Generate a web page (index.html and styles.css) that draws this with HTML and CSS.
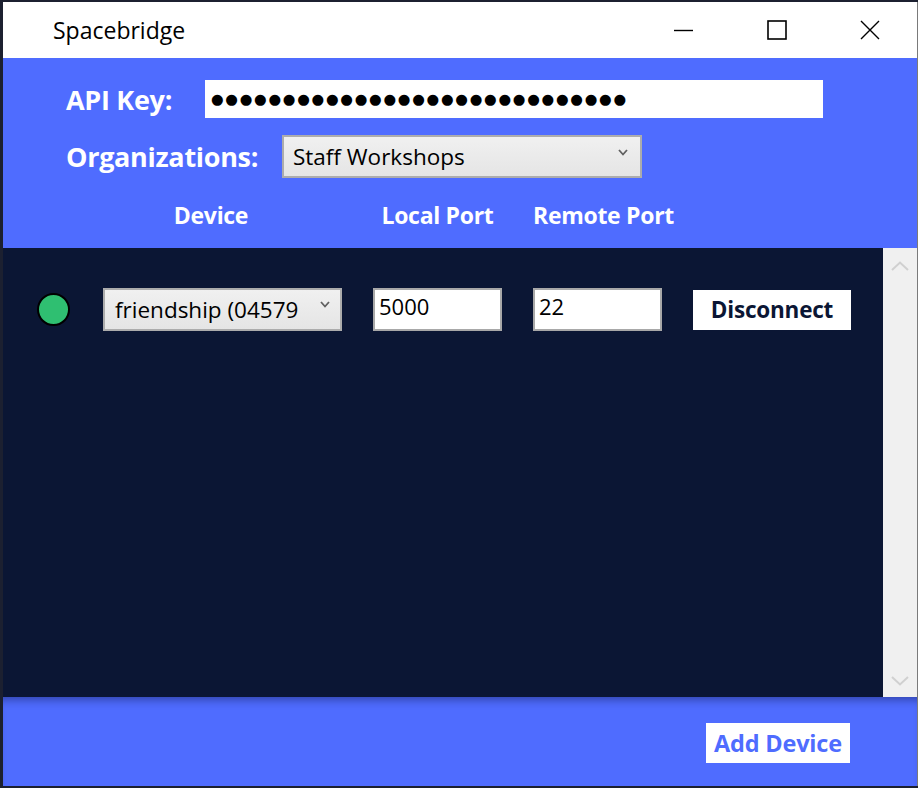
FILE: index.html
```html
<!DOCTYPE html>
<html lang="en">
<head>
<meta charset="utf-8">
<title>Spacebridge</title>
<link rel="stylesheet" href="styles.css">
</head>
<body>
<div class="window">
  <div class="titlebar">
    <span class="title">Spacebridge</span>
    <div class="controls">
      <span class="ctl"><svg width="20" height="20" viewBox="0 0 20 20"><line x1="0" y1="10.5" x2="19" y2="10.5" stroke="#000" stroke-width="1.4"/></svg></span>
      <span class="ctl"><svg width="20" height="20" viewBox="0 0 20 20"><rect x="1" y="1" width="18" height="18" fill="none" stroke="#000" stroke-width="1.6"/></svg></span>
      <span class="ctl"><svg width="20" height="20" viewBox="0 0 20 20"><path d="M1 1 L19 19 M19 1 L1 19" stroke="#000" stroke-width="1.4" fill="none"/></svg></span>
    </div>
  </div>
  <div class="header">
    <div class="row row-key">
      <span class="label label-key">API Key:</span>
      <div class="keybox"><span class="dots">●●●●●●●●●●●●●●●●●●●●●●●●●●●●●</span></div>
    </div>
    <div class="row row-org">
      <span class="label label-org">Organizations:</span>
      <div class="select select-org"><span>Staff Workshops</span><svg class="chev" width="10" height="7" viewBox="0 0 10 7"><path d="M1 1 L5 5.5 L9 1" fill="none" stroke="#606060" stroke-width="1.8"/></svg></div>
    </div>
    <div class="cols">
      <span class="col col-device">Device</span>
      <span class="col col-local">Local Port</span>
      <span class="col col-remote">Remote Port</span>
    </div>
  </div>
  <div class="list">
    <div class="list-body">
      <div class="device-row">
        <span class="status"></span>
        <div class="select select-dev"><span>friendship (04579</span><svg class="chev" width="10" height="7" viewBox="0 0 10 7"><path d="M1 1 L5 5.5 L9 1" fill="none" stroke="#606060" stroke-width="1.8"/></svg></div>
        <div class="port">5000</div>
        <div class="port">22</div>
        <div class="btn btn-dark">Disconnect</div>
      </div>
    </div>
    <div class="scrollbar">
      <svg width="18" height="10" viewBox="0 0 18 10"><path d="M1 9 L9 1.5 L17 9" fill="none" stroke="#d0d0d0" stroke-width="2"/></svg>
      <svg width="18" height="10" viewBox="0 0 18 10"><path d="M1 1 L9 8.5 L17 1" fill="none" stroke="#d0d0d0" stroke-width="2"/></svg>
    </div>
  </div>
  <div class="footer">
    <div class="btn btn-add">Add Device</div>
  </div>
</div>
</body>
</html>
```
FILE: styles.css
```css
html, body {
  margin: 0;
  padding: 0;
}
body {
  width: 918px;
  height: 788px;
  background: #1c2030;
  overflow: hidden;
  font-family: "Open Sans", "Noto Sans", sans-serif;
}
.window {
  margin: 2px 0 0 3px;
  width: 914px;
  height: 784px;
  border-right: 1px solid #7a7a7a;
  display: flex;
  flex-direction: column;
}
.titlebar {
  height: 56px;
  background: #fff;
  display: flex;
  align-items: center;
  justify-content: space-between;
}
.title {
  margin-left: 50px;
  font-size: 23px;
  color: #000;
  margin-top: -1px;
}
.controls {
  display: flex;
  margin-right: 37px;
  gap: 73px;
}
.ctl {
  display: flex;
  width: 20px;
  height: 20px;
}
.header {
  height: 190px;
  background: #4f6cff;
  color: #fff;
  padding-left: 63px;
  box-sizing: border-box;
  display: flex;
  flex-direction: column;
}
.row {
  display: flex;
  align-items: center;
}
.row-key {
  margin-top: 22px;
  height: 38px;
}
.row-org {
  margin-top: 17px;
  height: 43px;
}
.label {
  font-weight: 700;
  font-size: 27px;
  letter-spacing: -0.3px;
}
.label-key { width: 139px; }
.label-org { width: 216px; }
.keybox {
  width: 618px;
  height: 38px;
  background: #fff;
  display: flex;
  align-items: center;
  padding-left: 6px;
  box-sizing: border-box;
}
.dots {
  font-family: "DejaVu Sans", sans-serif;
  font-size: 14.5px;
  color: #000;
  letter-spacing: 1.72px;
}
.select {
  box-sizing: border-box;
  border: 2px solid #acacac;
  background: linear-gradient(#f0f0f0, #e5e5e5);
  display: flex;
  align-items: center;
  justify-content: space-between;
  color: #000;
  font-size: 22.5px;
}
.select-org {
  width: 360px;
  height: 43px;
  padding: 0 12px 0 9px;
}
.select-org .chev { margin-top: -8px; }
.cols {
  display: flex;
  margin-top: 21px;
  font-weight: 700;
  font-size: 23px;
  letter-spacing: -0.3px;
}
.col-device {
  margin-left: 37px;
  width: 216px;
  text-align: center;
}
.col-local {
  margin-left: 54px;
  width: 129px;
  text-align: center;
}
.col-remote {
  margin-left: 31px;
}
.list {
  flex: 1;
  display: flex;
  background: #0b1634;
}
.list-body {
  flex: 1;
}
.device-row {
  display: flex;
  align-items: center;
  margin-top: 40px;
  padding-left: 34px;
  height: 43px;
}
.status {
  width: 29px;
  height: 29px;
  border-radius: 50%;
  background: #2fbf71;
  border: 2px solid #000;
  margin-right: 33px;
}
.select-dev {
  width: 239px;
  height: 43px;
  padding: 0 10px 0 10px;
  margin-right: 31px;
}
.select-dev .chev { margin-top: -10px; }
.port {
  width: 129px;
  height: 43px;
  box-sizing: border-box;
  border: 2px solid #a8a8a8;
  background: #fff;
  color: #000;
  font-size: 22px;
  padding: 1px 0 0 4px;
  margin-right: 31px;
}
.btn {
  height: 40px;
  background: #fff;
  font-weight: 700;
  font-size: 22.5px;
  display: flex;
  align-items: center;
  justify-content: center;
  letter-spacing: -0.2px;
}
.btn-dark {
  width: 158px;
  color: #0b1634;
}
.scrollbar {
  width: 34px;
  background: #f0f0f0;
  display: flex;
  flex-direction: column;
  justify-content: space-between;
  align-items: center;
  padding: 13px 0 11px;
  box-sizing: border-box;
}
.footer {
  height: 89px;
  background: #4f6cff;
  box-shadow: inset 0 9px 9px -6px rgba(20, 30, 90, 0.5);
  display: flex;
  justify-content: flex-end;
  align-items: flex-start;
  padding: 26px 67px 0 0;
  box-sizing: border-box;
}
.btn-add {
  width: 144px;
  color: #4f6cff;
  font-size: 23.5px;
}
```
